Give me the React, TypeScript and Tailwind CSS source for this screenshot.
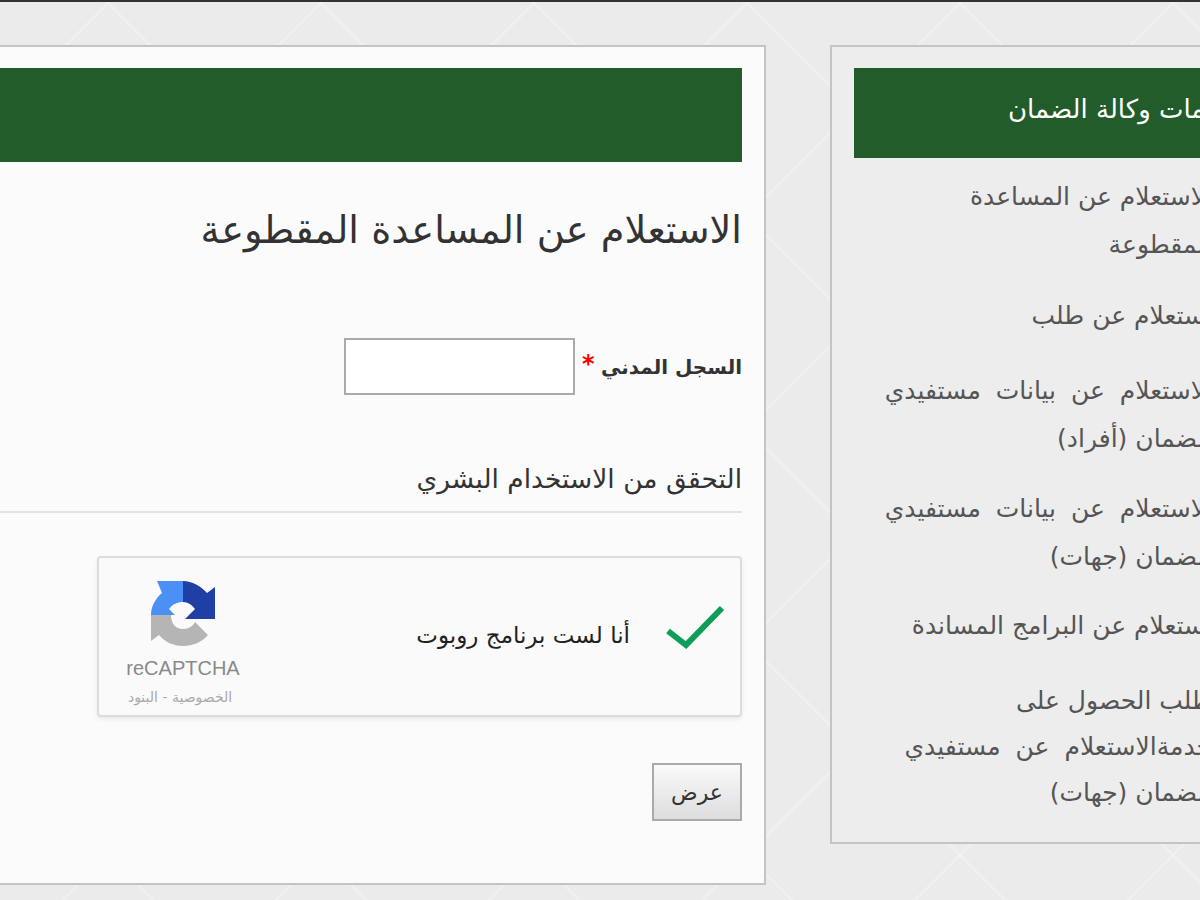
const arabic = "font-['DejaVu_Sans','Noto_Sans',sans-serif]"

function RecaptchaLogo() {
  return (
    <svg viewBox="40 10 65 67" width="65" height="67" aria-hidden="true">
      <path d="M46 12 L72 12 L72 33 C66 33 62 35 58 40 L64 46 L40 46 C40 38 44 30 51 24 Z" fill="#4a90f5" />
      <path d="M72 12 C81 12 90 17 96 24 L104 18 L104 50 L74 50 L84 40 C81 36 77 33 72 33 Z" fill="#1f3ea6" />
      <path d="M40 46 L60 46 C60 55 65 60 72 60 C78 60 82 57 84 53 L97 66 C91 73 82 77 72 77 C62 77 54 73 48 66 L40 72 Z" fill="#b5b5b5" />
    </svg>
  )
}

function SideItem({ lines, className = 'leading-[48px]' }: { lines: string[]; className?: string }) {
  return (
    <li className={`text-[25px] text-[#555] whitespace-nowrap ${className}`}>
      {lines.map((line) => (
        <div key={line} className={line.includes('مستفيدي') ? '[word-spacing:7px]' : ''}>
          {line}
        </div>
      ))}
    </li>
  )
}

export default function App() {
  return (
    <div dir="ltr" className={`relative h-[900px] w-[1200px] overflow-hidden bg-[#ebebeb] ${arabic}`}>
      <svg className="absolute inset-0" width="1200" height="900" aria-hidden="true">
        <defs>
          <pattern id="bg" width="213" height="213" patternUnits="userSpaceOnUse" x="1.5" y="3">
            <path d="M106.5 0 L213 106.5 L106.5 213 L0 106.5 Z" fill="none" stroke="#f3f3f3" strokeWidth="1.5" />
          </pattern>
        </defs>
        <rect width="1200" height="900" fill="url(#bg)" />
      </svg>

      <div className="relative h-[2px] bg-[#333]" />

      <div className="relative -ml-[100px] mt-[43px] flex w-[1500px] items-start gap-[64px]">
        <div dir="rtl" className="h-[840px] w-[866px] shrink-0 border-2 border-[#c4c4c4] bg-[#fbfbfb] px-[22px] pt-[21px]">
          <div className="h-[94px] bg-[#225c2b]" />
          <h1 className="mt-[43px] text-[38.3px] leading-[50px] font-normal text-[#333]">الاستعلام عن المساعدة المقطوعة</h1>

          <div className="mt-[83px] flex h-[57px] items-center gap-[26px]">
            <label className="relative text-[20px] font-bold text-[#333]">
              السجل المدني
              <span className="absolute top-[-6px] left-[-19px] text-[24px] text-[#f00]">*</span>
            </label>
            <input className="h-[57px] w-[231px] border-2 border-[#aaa] bg-white" />
          </div>

          <div className="mt-[66px] border-b-2 border-[#e3e3e3] pb-[14px] text-[26.5px] leading-[36px] text-[#333]">
            التحقق من الاستخدام البشري
          </div>

          <div className="mt-[43px] flex h-[161px] w-[645px] items-start rounded-[4px] border-2 border-[#dcdcdc] bg-[#fafafa] shadow-[0_2px_4px_rgba(0,0,0,0.08)]">
            <svg className="mt-[46px] mr-[15px] shrink-0" viewBox="0 0 60 46" width="60" height="46" aria-hidden="true">
              <polyline points="3,27 21,41 57,4" fill="none" stroke="#0f9d58" strokeWidth="6" />
            </svg>
            <span className="mt-[62px] mr-[35px] text-[23px] leading-[30px] text-[#222]">أنا لست برنامج روبوت</span>
            <div dir="ltr" className="mt-[21px] mr-auto ml-[25px] flex w-[118px] flex-col items-center font-['Liberation_Sans',sans-serif]">
              <RecaptchaLogo />
              <span className="mt-[10px] text-[20px] leading-[24px] text-[#8a8a8a]">reCAPTCHA</span>
              <span dir="rtl" className={`mt-[8px] -ml-[6px] text-[14px] leading-[18px] text-[#aaa] ${arabic}`}>الخصوصية - البنود</span>
            </div>
          </div>

          <button className="mt-[46px] h-[58px] w-[90px] border-2 border-[#aaa] bg-gradient-to-b from-[#fafafa] to-[#dddddd] text-[22px] text-[#333]">
            عرض
          </button>
        </div>

        <div dir="rtl" className="h-[799px] w-[500px] shrink-0 border-2 border-[#c4c4c4] bg-[#ededed] px-[22px] pt-[21px]">
          <div className="flex h-[90px] items-center bg-[#225c2b] pr-[71px] pb-[8px] text-[26px] text-white">
            <span>خدمات وكالة الضمان</span>
          </div>
          <ul className="mt-[15px] flex flex-col pr-[94px]">
            <SideItem lines={['الاستعلام عن المساعدة', 'المقطوعة']} />
            <SideItem className="mt-[23px] leading-[48px]" lines={['استعلام عن طلب']} />
            <SideItem className="mt-[27px] leading-[48px]" lines={['الاستعلام عن بيانات مستفيدي', 'الضمان (أفراد)']} />
            <SideItem className="mt-[22px] leading-[48px]" lines={['الاستعلام عن بيانات مستفيدي', 'الضمان (جهات)']} />
            <SideItem className="mt-[21px] leading-[48px]" lines={['استعلام عن البرامج المساندة']} />
            <SideItem className="mt-[28px] leading-[46px]" lines={['طلب الحصول على', 'خدمةالاستعلام عن مستفيدي', 'الضمان (جهات)']} />
          </ul>
        </div>
      </div>
    </div>
  )
}
